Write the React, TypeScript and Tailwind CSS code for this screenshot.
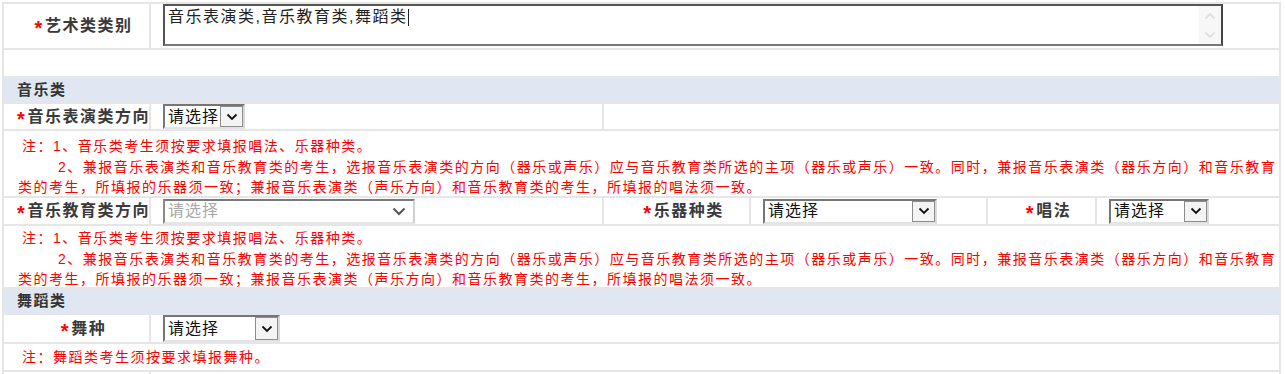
import React from "react";

function Chevron({ className = "" }: { className?: string }) {
  return (
    <svg width="12" height="8" viewBox="0 0 12 8" className={className}>
      <path d="M1.5 1.5 L6 6 L10.5 1.5" fill="none" stroke="currentColor" strokeWidth="1.8" />
    </svg>
  );
}

function ClassicSelect({ w, h = "h-[25px]" }: { w: string; h?: string }) {
  return (
    <div
      className={`flex ${h} ${w} items-stretch border-2 border-t-[#767676] border-l-[#767676] border-b-[#e4e4e4] border-r-[#d9d9d9] bg-white`}
    >
      <span className="flex flex-1 items-center pl-[3px] text-[16px] tracking-[1px] text-[#111]">请选择</span>
      <span className="flex w-[23px] items-center justify-center border border-[#8c8c8c] bg-[#f4f4f4] text-[#111]">
        <Chevron />
      </span>
    </div>
  );
}

function Star() {
  return (
    <span className="mr-[1px] inline-block translate-y-[2px] text-[20px] leading-none font-bold text-[#ff0000]">*</span>
  );
}

function Label({ text, w = "w-[147px]" }: { text: string; w?: string }) {
  return (
    <div className={`flex ${w} shrink-0 items-center justify-center border-r-2 border-[#e6e6e6] pl-[14px] text-[16px] font-bold tracking-[1.5px] text-[#3a3a3a] whitespace-nowrap`}>
      <Star />
      {text}
    </div>
  );
}

function Notes({ h, pt }: { h: string; pt: string }) {
  return (
    <div className={`${h} ${pt} border-b-2 border-[#e6e6e6] pl-[14px] text-[14px] leading-[20.5px] tracking-[1.5px] text-[#ff0000] whitespace-nowrap`}>
      <div className="pl-[4px]">注：1、音乐类考生须按要求填报唱法、乐器种类。</div>
      <div className="pl-[40px]">
        2、兼报音乐表演类和音乐教育类的考生，选报音乐表演类的方向（器乐或声乐）应与音乐教育类所选的主项（器乐或声乐）一致。同时，兼报音乐表演类（器乐方向）和音乐教育
      </div>
      <div>类的考生，所填报的乐器须一致；兼报音乐表演类（声乐方向）和音乐教育类的考生，所填报的唱法须一致。</div>
    </div>
  );
}

function Header({ text }: { text: string }) {
  return (
    <div className="flex h-[26px] items-center border-b-2 border-[#e6e6e6] bg-[#e1e7f2] pl-[13px] text-[15px] font-bold tracking-[1.5px] text-[#333]">
      {text}
    </div>
  );
}

export default function App() {
  return (
    <div className="h-[374px] w-[1285px] overflow-hidden bg-white pl-[2px] pt-[2px] font-['Liberation_Sans','Noto_Sans_CJK_SC',sans-serif]">
      <div className="w-[1279px] border-2 border-b-0 border-[#e6e6e6]">
        {/* Row 1 */}
        <div className="flex h-[46px] border-b-2 border-[#e6e6e6]">
          <Label text="艺术类类别" />
          <div className="flex-1 pl-[12px]">
            <div className="relative h-[42px] w-[1060px] border-2 border-t-[#555] border-l-[#555] border-b-[#777] border-r-[#444] bg-white">
              <div className="pl-[3px] text-[16px] leading-[22px] tracking-[1.5px] text-[#222]">
                音乐表演类,音乐教育类,舞蹈类<span className="ml-[1px] inline-block h-[17px] w-[1px] bg-[#222] align-middle" />
              </div>
              <div className="absolute right-0 top-0 flex h-full w-[22px] flex-col items-center justify-around bg-[#f7f7f7] text-[#dedede]">
                <Chevron className="rotate-180" />
                <Chevron />
              </div>
            </div>
          </div>
        </div>
        {/* Row 2 empty */}
        <div className="h-[28px] border-b-2 border-[#e6e6e6]" />
        <Header text="音乐类" />
        {/* Row 4 */}
        <div className="flex h-[27px] border-b-2 border-[#e6e6e6]">
          <Label text="音乐表演类方向" />
          <div className="flex w-[453px] items-center border-r-2 border-[#e6e6e6] pl-[12px]">
            <ClassicSelect w="w-[82px]" />
          </div>
          <div className="flex-1" />
        </div>
        <Notes h="h-[67px]" pt="pt-[5px]" />
        {/* Row 6 */}
        <div className="flex h-[28px] border-b-2 border-[#e6e6e6]">
          <Label text="音乐教育类方向" />
          <div className="flex w-[453px] items-center border-r-2 border-[#e6e6e6] pl-[12px]">
            <div className="flex h-[25px] w-[252px] items-center border-2 border-t-[#7a7a7a] border-l-[#8a8a8a] border-b-[#e6e6e6] border-r-[#d0d0d0] bg-white">
              <span className="flex-1 pl-[3px] text-[16px] tracking-[1px] text-[#a8a8a8]">请选择</span>
              <span className="pr-[7px] text-[#555]">
                <svg width="14" height="9" viewBox="0 0 14 9">
                  <path d="M1.5 1.5 L7 7 L12.5 1.5" fill="none" stroke="currentColor" strokeWidth="2" />
                </svg>
              </span>
            </div>
          </div>
          <Label text="乐器种类" />
          <div className="flex w-[237px] items-center border-r-2 border-[#e6e6e6] pl-[12px]">
            <ClassicSelect w="w-[174px]" />
          </div>
          <Label text="唱法" w="w-[109px]" />
          <div className="flex flex-1 items-center pl-[12px]">
            <ClassicSelect w="w-[100px]" />
          </div>
        </div>
        <Notes h="h-[63px]" pt="pt-[2px]" />
        <Header text="舞蹈类" />
        {/* 舞种 */}
        <div className="flex h-[29px] border-b-2 border-[#e6e6e6]">
          <Label text="舞种" />
          <div className="flex flex-1 items-center pl-[12px]">
            <ClassicSelect w="w-[117px]" h="h-[27px]" />
          </div>
        </div>
        <div className="h-[28px] border-b-2 border-[#e6e6e6] pl-[14px] pt-[3px] text-[14px] leading-[20px] tracking-[1.5px] text-[#ff0000] whitespace-nowrap">
          <span className="pl-[4px]">注：舞蹈类考生须按要求填报舞种。</span>
        </div>
        <div className="flex h-[30px]">
          <div className="w-[147px] border-r-2 border-[#e6e6e6]" />
          <div className="flex-1" />
        </div>
      </div>
    </div>
  );
}
